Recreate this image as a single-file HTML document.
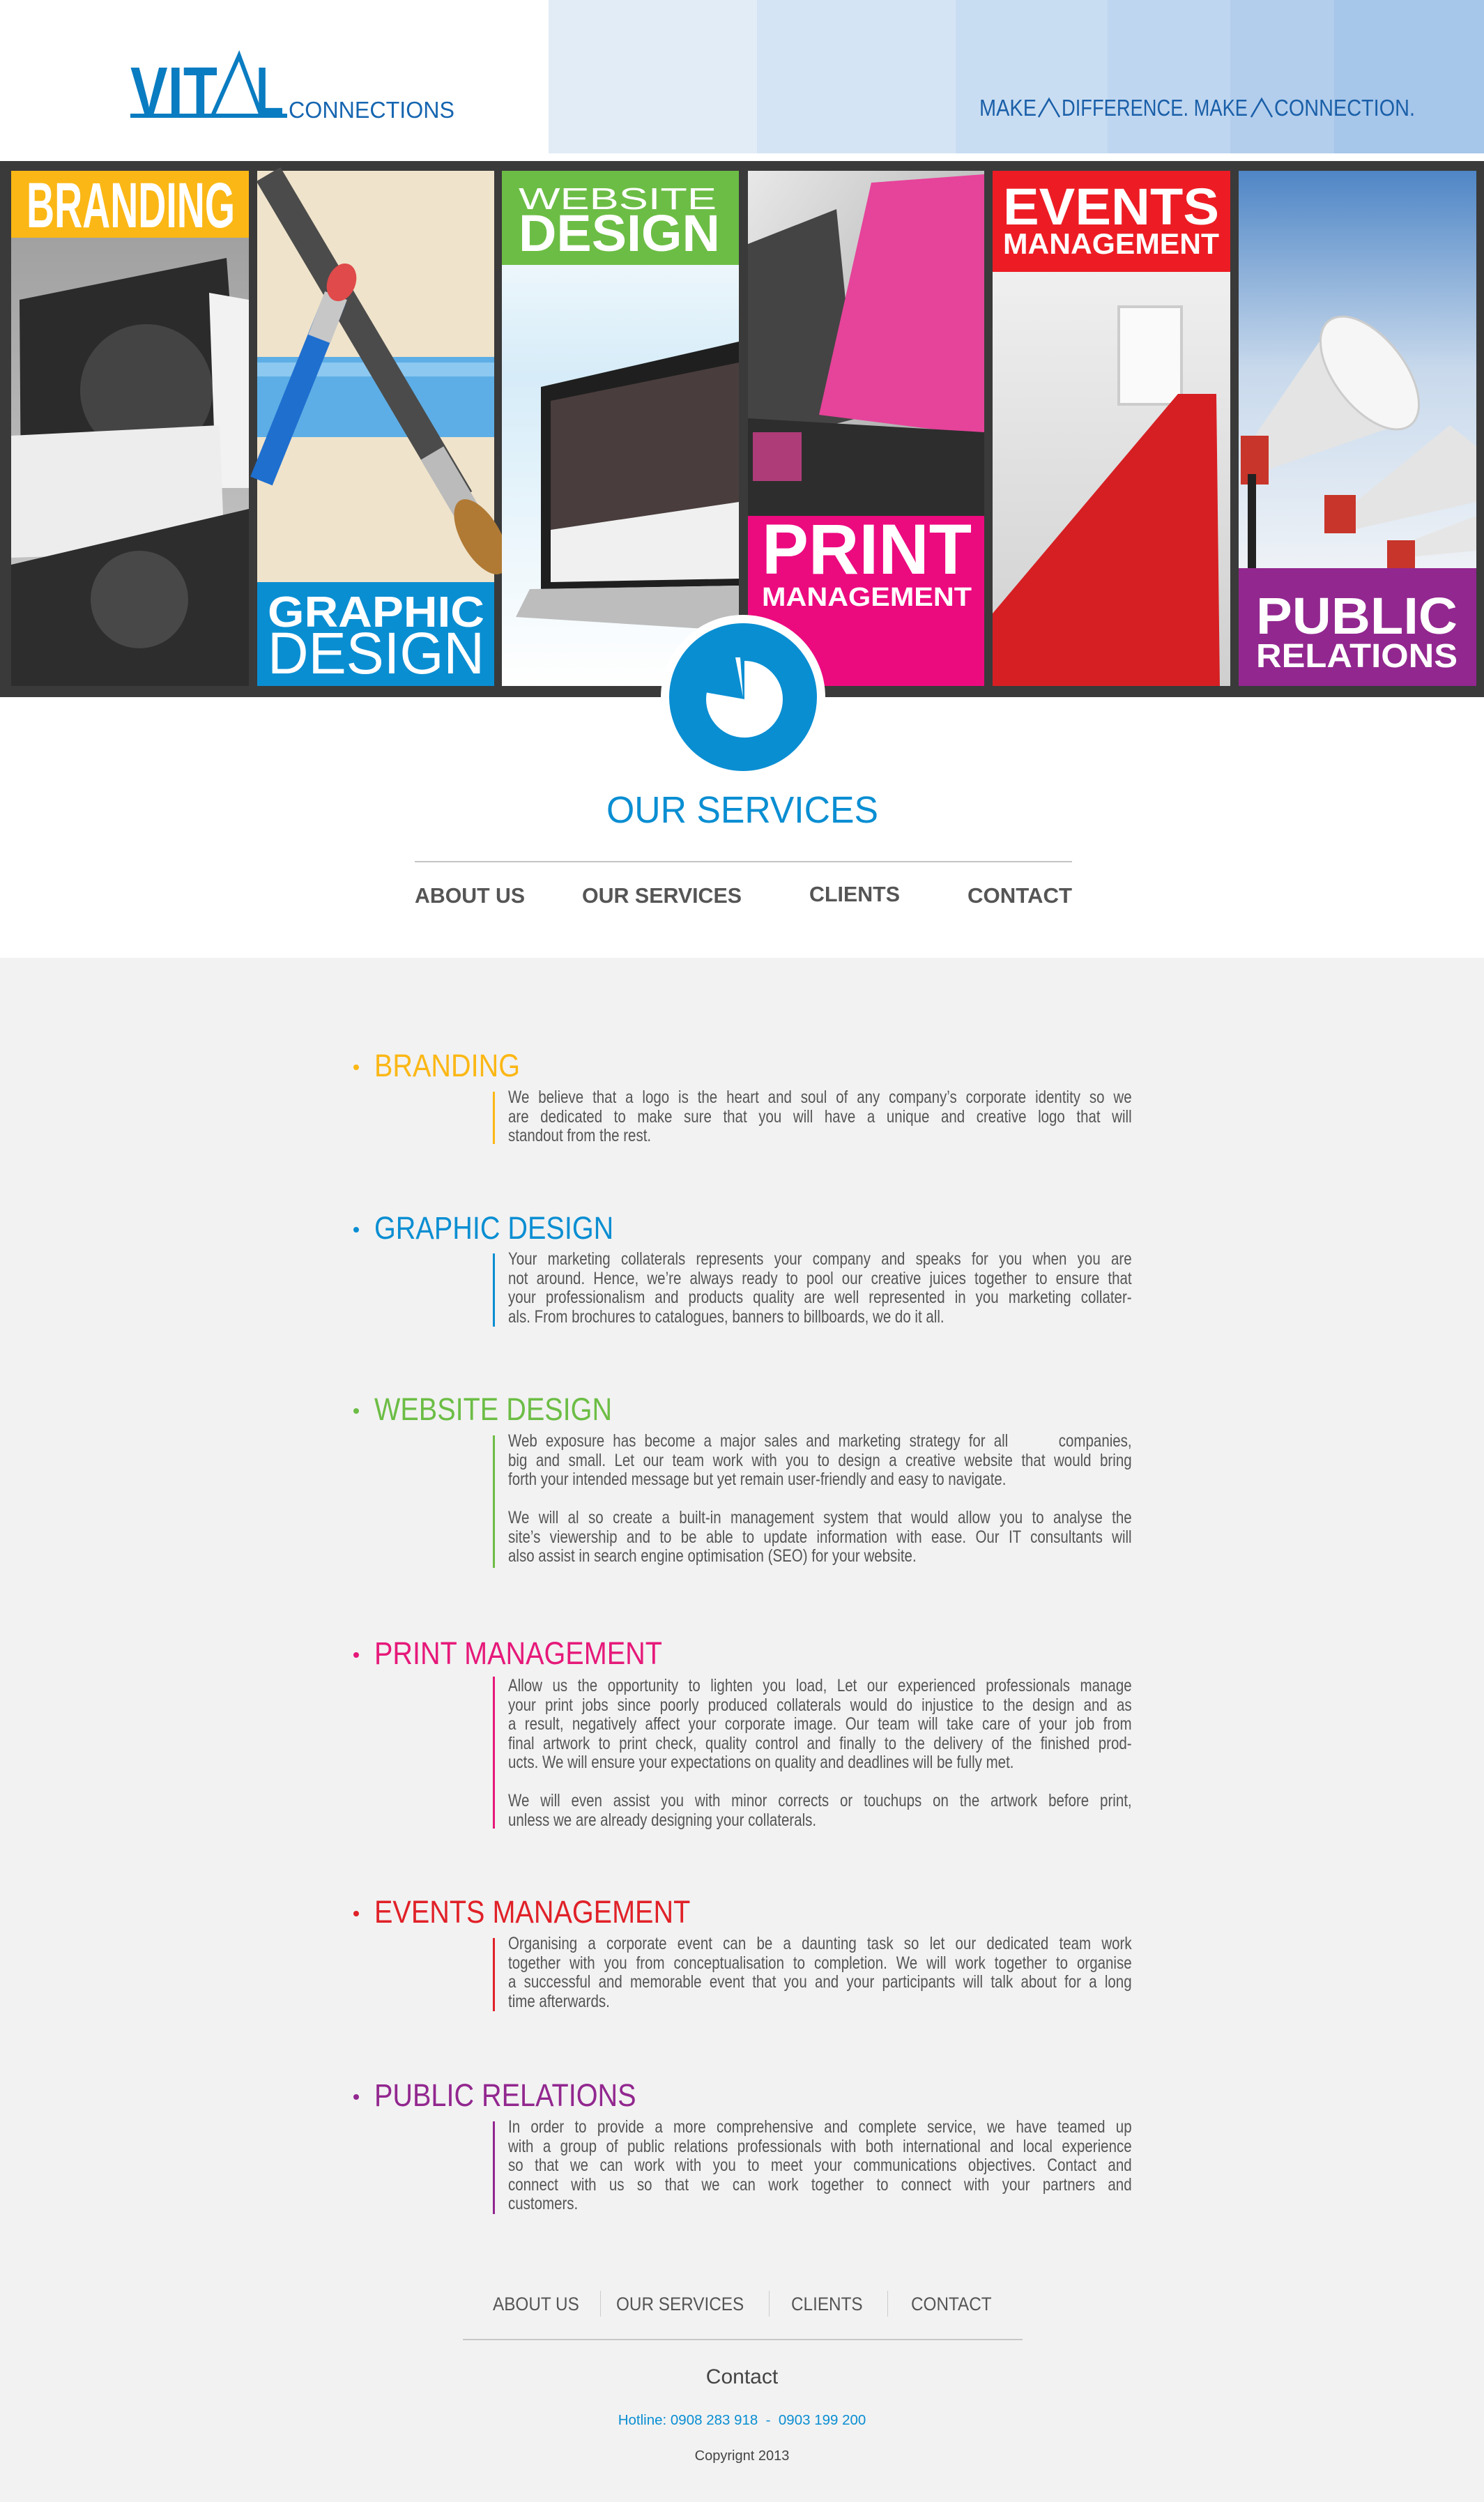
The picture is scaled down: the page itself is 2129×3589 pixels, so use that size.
<!DOCTYPE html>
<html><head><meta charset="utf-8">
<style>
*{margin:0;padding:0;box-sizing:border-box}
body{width:2129px;height:3589px;background:#f2f2f2;position:relative;overflow:hidden;font-family:"Liberation Sans",Arial,sans-serif}
#top{position:absolute;left:0;top:0;width:2129px;height:1374px;background:#fff}
.h{position:absolute;left:537px;font-size:45px;line-height:45px;white-space:nowrap;transform:scaleX(.88);transform-origin:left top}
.dot{position:absolute;left:507px;width:8px;height:8px;border-radius:50%}
.bar{position:absolute;left:707px;width:3px}
.p{position:absolute;left:729px;width:1091px;transform:scaleX(.82);transform-origin:left top;font-size:25px;line-height:27.5px;color:#555}
.p div{text-align:justify;text-align-last:justify;height:27.5px;white-space:nowrap;overflow:visible}
.p div.e{text-align-last:left}
.fn{position:absolute;top:3290px;font-size:27px;color:#555;transform:scaleX(.9);transform-origin:left top;white-space:nowrap}
.sep{position:absolute;top:3286px;width:1px;height:37px;background:#ccc}
</style></head><body>
<div id="top"></div>
<svg style="position:absolute;left:0;top:0" width="2129" height="1374" viewBox="0 0 2129 1374" font-family="Liberation Sans, Arial, sans-serif">
<defs>
<linearGradient id="gb" x1="0" y1="0" x2="0" y2="1"><stop offset="0" stop-color="#9a9a9a"/><stop offset="1" stop-color="#cfcfcf"/></linearGradient>
<linearGradient id="sky" x1="0" y1="0" x2="0" y2="1"><stop offset="0" stop-color="#4f86c6"/><stop offset=".5" stop-color="#c8d9ec"/><stop offset="1" stop-color="#eef2f7"/></linearGradient>
<linearGradient id="ev" x1="0" y1="0" x2="0" y2="1"><stop offset="0" stop-color="#f7f7f7"/><stop offset="1" stop-color="#cfcfcf"/></linearGradient>
<linearGradient id="pr" x1="0" y1="0" x2="1" y2="1"><stop offset="0" stop-color="#e8e8e8"/><stop offset="1" stop-color="#9a9a9a"/></linearGradient>
<linearGradient id="wb" x1="0" y1="0" x2="0" y2="1"><stop offset="0" stop-color="#fff"/><stop offset=".4" stop-color="#d6ecf8"/><stop offset="1" stop-color="#fff"/></linearGradient>
</defs>
<rect x="787" y="0" width="299" height="220" fill="#e1ecf7"/>
<rect x="1086" y="0" width="285" height="220" fill="#d4e4f4"/>
<rect x="1371" y="0" width="218" height="220" fill="#c9ddf2"/>
<rect x="1589" y="0" width="176" height="220" fill="#bfd6f0"/>
<rect x="1765" y="0" width="149" height="220" fill="#b3ceed"/>
<rect x="1914" y="0" width="215" height="220" fill="#a6c6ea"/>
<!-- logo -->
<text x="187" y="166" font-size="100" font-weight="bold" fill="#0a7cc1" textLength="125" lengthAdjust="spacingAndGlyphs">VIT</text>
<polyline points="305,166 343,80 375,166" fill="none" stroke="#0a7cc1" stroke-width="6"/>
<text x="367" y="166" font-size="100" font-weight="bold" fill="#0a7cc1" textLength="40" lengthAdjust="spacingAndGlyphs">L</text>
<rect x="187" y="163" width="225" height="6" fill="#0a7cc1"/>
<text x="414" y="169" font-size="33" fill="#1565b0" textLength="238" lengthAdjust="spacingAndGlyphs">CONNECTIONS</text>
<g font-size="33" fill="#1a5fa8">
<text x="1405" y="166" textLength="82" lengthAdjust="spacingAndGlyphs">MAKE</text>
<text x="1523" y="166" textLength="267" lengthAdjust="spacingAndGlyphs">DIFFERENCE. MAKE</text>
<text x="1828" y="166" textLength="202" lengthAdjust="spacingAndGlyphs">CONNECTION.</text>
</g>
<polyline points="1490,168 1505,142 1520,168" fill="none" stroke="#1a5fa8" stroke-width="2.5"/>
<polyline points="1795,168 1810,142 1825,168" fill="none" stroke="#1a5fa8" stroke-width="2.5"/>
<rect x="0" y="231" width="2129" height="769" fill="#3a3a3a"/>
<!-- Branding -->
<rect x="16" y="245" width="341" height="739" fill="url(#gb)"/>
<polygon points="28,430 325,370 345,640 30,705" fill="#2b2b2b"/>
<circle cx="210" cy="560" r="95" fill="#444"/>
<polygon points="300,420 357,430 357,700 310,700" fill="#f2f2f2"/>
<polygon points="16,625 315,610 322,790 16,800" fill="#ededed"/>
<polygon points="16,810 357,730 357,984 16,984" fill="#2d2d2d"/>
<circle cx="200" cy="860" r="70" fill="#484848"/>
<rect x="16" y="245" width="341" height="96" fill="#fbb715"/>
<text x="38" y="326" font-size="92" font-weight="bold" fill="#fff" textLength="299" lengthAdjust="spacingAndGlyphs">BRANDING</text>
<!-- Graphic -->
<rect x="369" y="245" width="340" height="590" fill="#efe3cb"/>
<rect x="369" y="512" width="340" height="115" fill="#5daee6"/>
<rect x="369" y="520" width="340" height="20" fill="#8cc8f0"/>
<line x1="385" y1="250" x2="660" y2="715" stroke="#4b4b4b" stroke-width="40"/>
<line x1="620" y1="650" x2="672" y2="738" stroke="#bbb" stroke-width="38"/>
<ellipse cx="690" cy="770" rx="28" ry="60" transform="rotate(-30 690 770)" fill="#b07a35"/>
<line x1="480" y1="430" x2="375" y2="690" stroke="#1f6fcf" stroke-width="34"/>
<line x1="482" y1="424" x2="458" y2="486" stroke="#c7c7c7" stroke-width="34"/>
<ellipse cx="490" cy="405" rx="20" ry="28" transform="rotate(22 490 405)" fill="#e04a4a"/>
<rect x="369" y="835" width="340" height="149" fill="#0a8ed2"/>
<text x="384" y="899" font-size="62" font-weight="bold" fill="#fff" textLength="311" lengthAdjust="spacingAndGlyphs">GRAPHIC</text>
<text x="384" y="966" font-size="84" fill="#fff" textLength="311" lengthAdjust="spacingAndGlyphs">DESIGN</text>
<!-- Website -->
<rect x="720" y="245" width="340" height="739" fill="url(#wb)"/>
<polygon points="776,555 1060,490 1060,840 776,845" fill="#1f1f1f"/>
<polygon points="790,575 1060,520 1060,720 790,760" fill="#4a3d3d"/>
<polygon points="790,760 1060,720 1060,830 790,835" fill="#f0f0f0"/>
<polygon points="760,845 1060,840 1060,905 740,885" fill="#bdbdbd"/>
<rect x="720" y="245" width="340" height="135" fill="#6cbd45"/>
<text x="744" y="300" font-size="44" fill="#fff" textLength="284" lengthAdjust="spacingAndGlyphs">WEBSITE</text>
<text x="744" y="360" font-size="74" font-weight="bold" fill="#fff" textLength="289" lengthAdjust="spacingAndGlyphs">DESIGN</text>
<!-- Print -->
<rect x="1073" y="245" width="339" height="495" fill="url(#pr)"/>
<polygon points="1073,350 1200,300 1230,600 1073,640" fill="#444"/>
<polygon points="1250,262 1412,250 1412,625 1175,595" fill="#e6439a"/>
<polygon points="1073,600 1412,620 1412,740 1073,740" fill="#2d2d2d"/>
<rect x="1080" y="620" width="70" height="70" fill="#e6439a" opacity=".7"/>
<rect x="1073" y="740" width="339" height="244" fill="#ec0a7f"/>
<text x="1093" y="823" font-size="102" font-weight="bold" fill="#fff" textLength="301" lengthAdjust="spacingAndGlyphs">PRINT</text>
<text x="1093" y="869" font-size="38" font-weight="bold" fill="#fff" textLength="301" lengthAdjust="spacingAndGlyphs">MANAGEMENT</text>
<!-- Events -->
<rect x="1424" y="245" width="341" height="739" fill="url(#ev)"/>
<rect x="1605" y="440" width="90" height="140" fill="#fafafa" stroke="#ccc" stroke-width="4"/>
<polygon points="1690,565 1745,565 1750,984 1424,984 1424,880" fill="#d61f23"/>
<rect x="1424" y="245" width="341" height="145" fill="#ed1c24"/>
<text x="1439" y="322" font-size="74" font-weight="bold" fill="#fff" textLength="310" lengthAdjust="spacingAndGlyphs">EVENTS</text>
<text x="1439" y="364" font-size="42" font-weight="bold" fill="#fff" textLength="310" lengthAdjust="spacingAndGlyphs">MANAGEMENT</text>
<!-- PR -->
<rect x="1777" y="245" width="341" height="570" fill="url(#sky)"/>
<polygon points="1790,640 1910,465 2020,605 1800,680" fill="#e4e4e4"/>
<ellipse cx="1965" cy="535" rx="50" ry="95" transform="rotate(-38 1965 535)" fill="#f6f6f6" stroke="#ccc" stroke-width="3"/>
<rect x="1780" y="625" width="40" height="70" fill="#c8352a"/>
<polygon points="1920,740 2080,610 2118,640 2118,720 1940,760" fill="#e4e4e4"/>
<rect x="1900" y="710" width="45" height="55" fill="#c8352a"/>
<polygon points="2000,785 2118,740 2118,790 2010,800" fill="#e6e6e6"/>
<rect x="1990" y="775" width="40" height="40" fill="#c8352a"/>
<rect x="1790" y="680" width="12" height="135" fill="#222"/>
<rect x="1777" y="815" width="341" height="169" fill="#92278f"/>
<text x="1802" y="909" font-size="74" font-weight="bold" fill="#fff" textLength="289" lengthAdjust="spacingAndGlyphs">PUBLIC</text>
<text x="1802" y="957" font-size="48" font-weight="bold" fill="#fff" textLength="289" lengthAdjust="spacingAndGlyphs">RELATIONS</text>
<!-- circle icon -->
<circle cx="1066" cy="1000" r="118" fill="#fff"/>
<circle cx="1066" cy="1000" r="106" fill="#0a8ed2"/>
<circle cx="1068" cy="1003" r="55" fill="#fff"/>
<path d="M1068,1003 L1068,946 A57,57 0 0 0 1011,993 Z" fill="#0a8ed2"/>
<polygon points="1055,943 1062,943 1066,1000" fill="#fff"/>
<text x="1065" y="1180" font-size="54" fill="#0a8ed2" text-anchor="middle" textLength="390" lengthAdjust="spacingAndGlyphs">OUR SERVICES</text>
<rect x="595" y="1235" width="943" height="2" fill="#c4c4c4"/>
<g font-size="31" font-weight="bold" fill="#555">
<text x="595" y="1295" textLength="158" lengthAdjust="spacingAndGlyphs">ABOUT US</text>
<text x="835" y="1295" textLength="229" lengthAdjust="spacingAndGlyphs">OUR SERVICES</text>
<text x="1161" y="1293" textLength="130" lengthAdjust="spacingAndGlyphs">CLIENTS</text>
<text x="1388" y="1295" textLength="150" lengthAdjust="spacingAndGlyphs">CONTACT</text>
</g>
</svg>

<div class="dot" style="top:1527px;background:#fbb715"></div>
<div class="h" style="top:1506px;color:#fbb715">BRANDING</div>
<div class="bar" style="top:1566px;height:75px;background:#fbb715"></div>
<div class="p" style="top:1561px">
<div>We believe that a logo is the heart and soul of any company’s corporate identity so we</div>
<div>are dedicated to make sure that you will have a unique and creative logo that will</div>
<div class="e">standout from the rest.</div>
</div>

<div class="dot" style="top:1760px;background:#0a8ed2"></div>
<div class="h" style="top:1739px;color:#0a8ed2">GRAPHIC DESIGN</div>
<div class="bar" style="top:1798px;height:105px;background:#0a8ed2"></div>
<div class="p" style="top:1793px">
<div>Your marketing collaterals represents your company and speaks for you when you are</div>
<div>not around. Hence, we’re always ready to pool our creative juices together to ensure that</div>
<div>your professionalism and products quality are well represented in you marketing collater-</div>
<div class="e">als. From brochures to catalogues, banners to billboards, we do it all.</div>
</div>

<div class="dot" style="top:2020px;background:#6cbd45"></div>
<div class="h" style="top:1999px;color:#6cbd45">WEBSITE DESIGN</div>
<div class="bar" style="top:2059px;height:190px;background:#6cbd45"></div>
<div class="p" style="top:2054px">
<div>Web exposure has become a major sales and marketing strategy for all&nbsp;&nbsp;&nbsp;&nbsp;&nbsp; companies,</div>
<div>big and small. Let our team work with you to design a creative website that would bring</div>
<div class="e">forth your intended message but yet remain user-friendly and easy to navigate.</div>
<div></div>
<div>We will al so create a built-in management system that would allow you to analyse the</div>
<div>site’s viewership and to be able to update information with ease. Our IT consultants will</div>
<div class="e">also assist in search engine optimisation (SEO) for your website.</div>
</div>

<div class="dot" style="top:2370px;background:#e6197a"></div>
<div class="h" style="top:2349px;color:#e6197a">PRINT MANAGEMENT</div>
<div class="bar" style="top:2405px;height:218px;background:#e6197a"></div>
<div class="p" style="top:2405px">
<div>Allow us the opportunity to lighten you load, Let our experienced professionals manage</div>
<div>your print jobs since poorly produced collaterals would do injustice to the design and as</div>
<div>a result, negatively affect your corporate image. Our team will take care of your job from</div>
<div>final artwork to print check, quality control and finally to the delivery of the finished prod-</div>
<div class="e">ucts. We will ensure your expectations on quality and deadlines will be fully met.</div>
<div></div>
<div>We will even assist you with minor corrects or touchups on the artwork before print,</div>
<div class="e">unless we are already designing your collaterals.</div>
</div>

<div class="dot" style="top:2741px;background:#e02128"></div>
<div class="h" style="top:2720px;color:#e02128">EVENTS MANAGEMENT</div>
<div class="bar" style="top:2780px;height:105px;background:#e02128"></div>
<div class="p" style="top:2775px">
<div>Organising a corporate event can be a daunting task so let our dedicated team work</div>
<div>together with you from conceptualisation to completion. We will work together to organise</div>
<div>a successful and memorable event that you and your participants will talk about for a long</div>
<div class="e">time afterwards.</div>
</div>

<div class="dot" style="top:3004px;background:#92278f"></div>
<div class="h" style="top:2983px;color:#92278f">PUBLIC RELATIONS</div>
<div class="bar" style="top:3043px;height:133px;background:#92278f"></div>
<div class="p" style="top:3038px">
<div>In order to provide a more comprehensive and complete service, we have teamed up</div>
<div>with a group of public relations professionals with both international and local experience</div>
<div>so that we can work with you to meet your communications objectives. Contact and</div>
<div>connect with us so that we can work together to connect with your partners and</div>
<div class="e">customers.</div>
</div>

<div class="fn" style="left:707px">ABOUT US</div>
<div class="sep" style="left:861px"></div>
<div class="fn" style="left:884px">OUR SERVICES</div>
<div class="sep" style="left:1103px"></div>
<div class="fn" style="left:1135px">CLIENTS</div>
<div class="sep" style="left:1273px"></div>
<div class="fn" style="left:1307px">CONTACT</div>
<div style="position:absolute;left:664px;top:3355px;width:803px;height:2px;background:#c8c8c8"></div>
<div style="position:absolute;left:0;width:2129px;top:3393px;text-align:center;font-size:30px;color:#444">Contact</div>
<div style="position:absolute;left:0;width:2129px;top:3460px;text-align:center;font-size:20.5px;color:#0a8ed2;white-space:pre">Hotline: 0908 283 918  -  0903 199 200</div>
<div style="position:absolute;left:0;width:2129px;top:3512px;text-align:center;font-size:20px;color:#444">Copyrignt 2013</div>
</body></html>
